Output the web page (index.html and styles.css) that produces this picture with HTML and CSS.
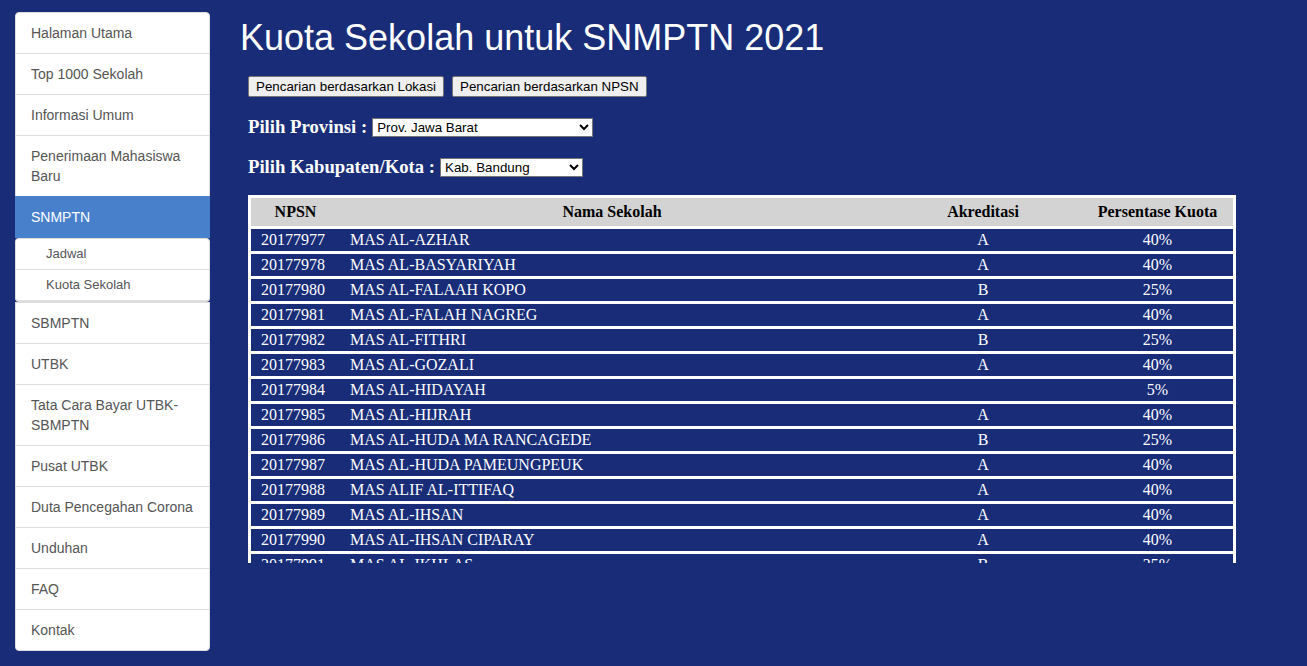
FILE: index.html
```html
<!DOCTYPE html>
<html lang="id">
<head>
<meta charset="utf-8">
<title>Kuota Sekolah untuk SNMPTN 2021</title>
<link rel="stylesheet" href="styles.css">
</head>
<body>
<div class="page">
  <nav class="sidebar">
    <ul class="menu">
      <li class="item first">Halaman Utama</li>
      <li class="item">Top 1000 Sekolah</li>
      <li class="item">Informasi Umum</li>
      <li class="item">Penerimaan Mahasiswa Baru</li>
      <li class="item active">SNMPTN</li>
    </ul>
    <ul class="submenu">
      <li class="subitem">Jadwal</li>
      <li class="subitem">Kuota Sekolah</li>
    </ul>
    <ul class="menu">
      <li class="item">SBMPTN</li>
      <li class="item">UTBK</li>
      <li class="item">Tata Cara Bayar UTBK-SBMPTN</li>
      <li class="item">Pusat UTBK</li>
      <li class="item">Duta Pencegahan Corona</li>
      <li class="item">Unduhan</li>
      <li class="item">FAQ</li>
      <li class="item last">Kontak</li>
    </ul>
  </nav>
  <main class="main">
    <h1 class="title">Kuota Sekolah untuk SNMPTN 2021</h1>
    <div class="content">
      <div class="buttons">
        <button class="btn">Pencarian berdasarkan Lokasi</button>
        <button class="btn">Pencarian berdasarkan NPSN</button>
      </div>
      <div class="field field-first">
        <label class="label">Pilih Provinsi :</label>
        <select class="sel sel-prov"><option>Prov. Jawa Barat</option></select>
      </div>
      <div class="field">
        <label class="label">Pilih Kabupaten/Kota :</label>
        <select class="sel sel-kab"><option>Kab. Bandung</option></select>
      </div>
      <div class="table-wrap">
        <table class="quota">
          <colgroup>
            <col class="c-npsn"><col class="c-name"><col class="c-akr"><col class="c-kuota">
          </colgroup>
          <thead>
            <tr><th>NPSN</th><th>Nama Sekolah</th><th>Akreditasi</th><th>Persentase Kuota</th></tr>
          </thead>
          <tbody>
            <tr><td>20177977</td><td>MAS AL-AZHAR</td><td class="ctr">A</td><td class="ctr">40%</td></tr>
            <tr><td>20177978</td><td>MAS AL-BASYARIYAH</td><td class="ctr">A</td><td class="ctr">40%</td></tr>
            <tr><td>20177980</td><td>MAS AL-FALAAH KOPO</td><td class="ctr">B</td><td class="ctr">25%</td></tr>
            <tr><td>20177981</td><td>MAS AL-FALAH NAGREG</td><td class="ctr">A</td><td class="ctr">40%</td></tr>
            <tr><td>20177982</td><td>MAS AL-FITHRI</td><td class="ctr">B</td><td class="ctr">25%</td></tr>
            <tr><td>20177983</td><td>MAS AL-GOZALI</td><td class="ctr">A</td><td class="ctr">40%</td></tr>
            <tr><td>20177984</td><td>MAS AL-HIDAYAH</td><td class="ctr"></td><td class="ctr">5%</td></tr>
            <tr><td>20177985</td><td>MAS AL-HIJRAH</td><td class="ctr">A</td><td class="ctr">40%</td></tr>
            <tr><td>20177986</td><td>MAS AL-HUDA MA RANCAGEDE</td><td class="ctr">B</td><td class="ctr">25%</td></tr>
            <tr><td>20177987</td><td>MAS AL-HUDA PAMEUNGPEUK</td><td class="ctr">A</td><td class="ctr">40%</td></tr>
            <tr><td>20177988</td><td>MAS ALIF AL-ITTIFAQ</td><td class="ctr">A</td><td class="ctr">40%</td></tr>
            <tr><td>20177989</td><td>MAS AL-IHSAN</td><td class="ctr">A</td><td class="ctr">40%</td></tr>
            <tr><td>20177990</td><td>MAS AL-IHSAN CIPARAY</td><td class="ctr">A</td><td class="ctr">40%</td></tr>
            <tr><td>20177991</td><td>MAS AL-IKHLAS</td><td class="ctr">B</td><td class="ctr">25%</td></tr>
            <tr><td>20177992</td><td>MAS AL-ISTIQOMAH</td><td class="ctr">A</td><td class="ctr">40%</td></tr>
            <tr><td>20177993</td><td>MAS AL-ITTIHAD</td><td class="ctr">B</td><td class="ctr">25%</td></tr>
          </tbody>
        </table>
      </div>
    </div>
  </main>
</div>
</body>
</html>
```

FILE: styles.css
```css
* { box-sizing: border-box; }
html, body { margin: 0; padding: 0; }
body {
  background: #182c78;
  font-family: "Liberation Sans", Arial, sans-serif;
  height: 666px;
  overflow: hidden;
}
.page {
  display: flex;
  align-items: flex-start;
}
.sidebar {
  width: 195px;
  margin: 12px 0 0 15px;
  flex: none;
}
.menu, .submenu {
  list-style: none;
  margin: 0;
  padding: 0;
}
.item {
  background: #fff;
  color: #555;
  font-size: 14px;
  line-height: 20px;
  padding: 10px 15px;
  border: 1px solid #ddd;
  margin-bottom: -1px;
}
.item.first { border-radius: 4px 4px 0 0; }
.item.last { border-radius: 0 0 4px 4px; margin-bottom: 0; }
.item.active {
  background: #4880cc;
  border-color: #4880cc;
  color: #fff;
  position: relative;
  margin-bottom: 0;
}
.submenu {
  background: #fff;
  border: 1px solid #ddd;
  border-bottom-width: 2px;
  border-radius: 4px;
}
.subitem {
  color: #555;
  font-size: 13px;
  line-height: 18px;
  padding: 6px 15px 6px 30px;
}
.subitem + .subitem { border-top: 1px solid #ddd; }
.main {
  flex: 1;
  padding-left: 30px;
}
.title {
  margin: 18px 0 0 0;
  font-weight: normal;
  font-size: 36px;
  line-height: 40px;
  color: #fff;
}
.content {
  margin-left: 8px;
}
.buttons {
  display: flex;
  gap: 8px;
  margin-top: 18px;
}
.btn {
  font-family: "Liberation Sans", Arial, sans-serif;
  font-size: 13.333px;
  height: 21px;
  padding: 1px 7px;
  background: #efefef;
  border: 1px solid #767676;
  border-radius: 2px;
  color: #000;
}
.field {
  display: flex;
  align-items: center;
  height: 40px;
}
.field-first { margin-top: 10px; }
.label {
  font-family: "Liberation Serif", "Times New Roman", serif;
  font-weight: bold;
  font-size: 18.72px;
  color: #fff;
  margin-right: 5px;
}
.sel {
  font-family: "Liberation Sans", Arial, sans-serif;
  font-size: 13.333px;
  height: 19px;
  padding: 0;
  border: 1px solid #767676;
  border-radius: 0;
  background: #fff;
  color: #000;
}
.sel-prov { width: 221px; }
.sel-kab { width: 143px; }
.table-wrap {
  margin-top: 8px;
  width: 988px;
  height: 368px;
  overflow: hidden;
  background: #fff;
  padding: 0 3px;
}
.quota {
  width: 982px;
  table-layout: fixed;
  border-collapse: separate;
  border-spacing: 0 3px;
  font-family: "Liberation Serif", "Times New Roman", serif;
  font-size: 16px;
}
.c-npsn { width: 89px; }
.c-name { width: 544px; }
.c-akr { width: 198px; }
.c-kuota { width: 151px; }
.quota th {
  background: #d3d3d3;
  color: #000;
  font-weight: bold;
  height: 28px;
  padding: 0;
  line-height: 18px;
  text-align: center;
}
.quota td {
  background: #182c78;
  color: #fff;
  height: 22px;
  padding: 0 0 0 10px;
  line-height: 18px;
  white-space: nowrap;
}
.quota td.ctr {
  text-align: center;
  padding: 0;
}
```
